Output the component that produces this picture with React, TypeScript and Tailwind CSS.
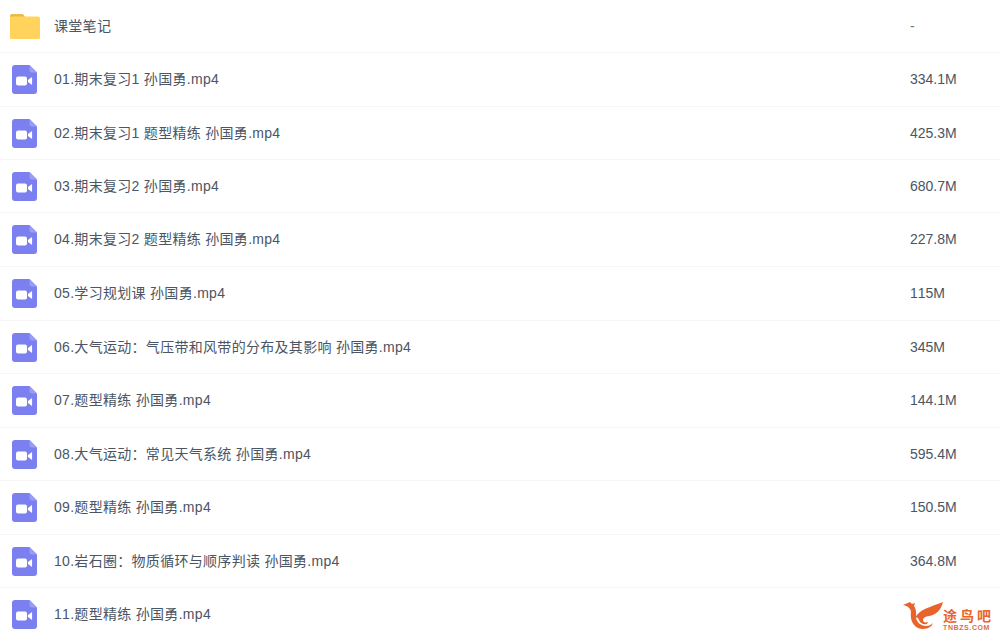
const files = [
  { name: '01.期末复习1 孙国勇.mp4', size: '334.1M', h: 'h-[54px]' },
  { name: '02.期末复习1 题型精练 孙国勇.mp4', size: '425.3M', h: 'h-[53px]' },
  { name: '03.期末复习2 孙国勇.mp4', size: '680.7M', h: 'h-[53px]' },
  { name: '04.期末复习2 题型精练 孙国勇.mp4', size: '227.8M', h: 'h-[54px]' },
  { name: '05.学习规划课 孙国勇.mp4', size: '115M', h: 'h-[54px]' },
  { name: '06.大气运动：气压带和风带的分布及其影响 孙国勇.mp4', size: '345M', h: 'h-[53px]' },
  { name: '07.题型精练 孙国勇.mp4', size: '144.1M', h: 'h-[54px]' },
  { name: '08.大气运动：常见天气系统 孙国勇.mp4', size: '595.4M', h: 'h-[53px]' },
  { name: '09.题型精练 孙国勇.mp4', size: '150.5M', h: 'h-[54px]' },
  { name: '10.岩石圈：物质循环与顺序判读 孙国勇.mp4', size: '364.8M', h: 'h-[53px]' },
  { name: '11.题型精练 孙国勇.mp4', size: '', h: 'h-[54px]' },
]

function FolderIcon() {
  return (
    <svg width="30" height="25" viewBox="0 0 30 25">
      <path d="M0 2a2 2 0 0 1 2-2h10a2 2 0 0 1 1.600.8L15 3H0z" fill="#e9b949" />
      <path d="M0 5a2 2 0 0 1 2-2.500h26a2 2 0 0 1 2 2V23.500a1.500 1.500 0 0 1-1.500 1.500h-27A1.500 1.500 0 0 1 0 23.500z" fill="#ffd35c" />
    </svg>
  )
}

function VideoIcon() {
  return (
    <svg width="25" height="29" viewBox="0 0 25 29">
      <path d="M3 0h14.500L25 7.500V26a3 3 0 0 1-3 3H3a3 3 0 0 1-3-3V3a3 3 0 0 1 3-3z" fill="#7b7ff0" />
      <path d="M17.500 0L25 7.500H20a2.500 2.500 0 0 1-2.500-2.500z" fill="#9a9df5" />
      <rect x="4" y="11.500" width="11" height="9" rx="2" fill="#fff" />
      <path d="M16 15l3.300-2.600a.5.5 0 0 1 .8.400v6.400a.5.5 0 0 1-.8.400L16 17z" fill="#fff" />
    </svg>
  )
}

function Logo() {
  return (
    <div className="absolute left-[903px] top-[601px] flex items-start">
      <svg width="40" height="29" viewBox="0 0 40 29">
        <path d="M0 4 L7 1 L9 3 L12 2 L11 5 C14 9 13 14 13 17 C14 22 19 25 23 25 C26 25 28 24 30 22 C28 28 20 29 15 27 C9 24 7 17 8 11 C8 8 5 5 0 4z" fill="#e8642c" />
        <path d="M12 17 C16 8 28 6 40 1 C38 9 33 14 26 15 C22 15.500 20 17 20 19 C20 21 22 22 25 21 L24 23 C20 24 17 22 16 19 C15 16 14 16 12 17z" fill="#e8642c" />
      </svg>
      <div className="mt-[8px] flex flex-col">
        <span className="text-[14px] leading-[15px] font-bold tracking-[3px] text-[#e8642c]">途鸟吧</span>
        <span className="text-[7px] leading-[7px] font-bold tracking-[0.6px] text-[#d9703f]">TNBZS.COM</span>
      </div>
    </div>
  )
}

export default function App() {
  return (
    <div className="relative h-[635px] w-[1000px] overflow-hidden bg-white font-['Liberation_Sans','Noto_Sans_CJK_SC',sans-serif] text-[14px] text-[#4b5563] [font-kerning:none]">
      <div className="flex h-[53px] items-center border-b border-[#f6f6f8] pl-[10px]">
        <FolderIcon />
        <span className="ml-[14px] flex-1 tracking-[0.3px]">课堂笔记</span>
        <span className="w-[90px] text-[#6b7280]">-</span>
      </div>
      {files.map((f) => (
        <div key={f.name} className={`flex items-center border-b border-[#f6f6f8] pl-[12px] ${f.h}`}>
          <VideoIcon />
          <span className="ml-[17px] flex-1 tracking-[0.3px]">{f.name}</span>
          <span className="w-[90px]">{f.size}</span>
        </div>
      ))}
      <Logo />
    </div>
  )
}
